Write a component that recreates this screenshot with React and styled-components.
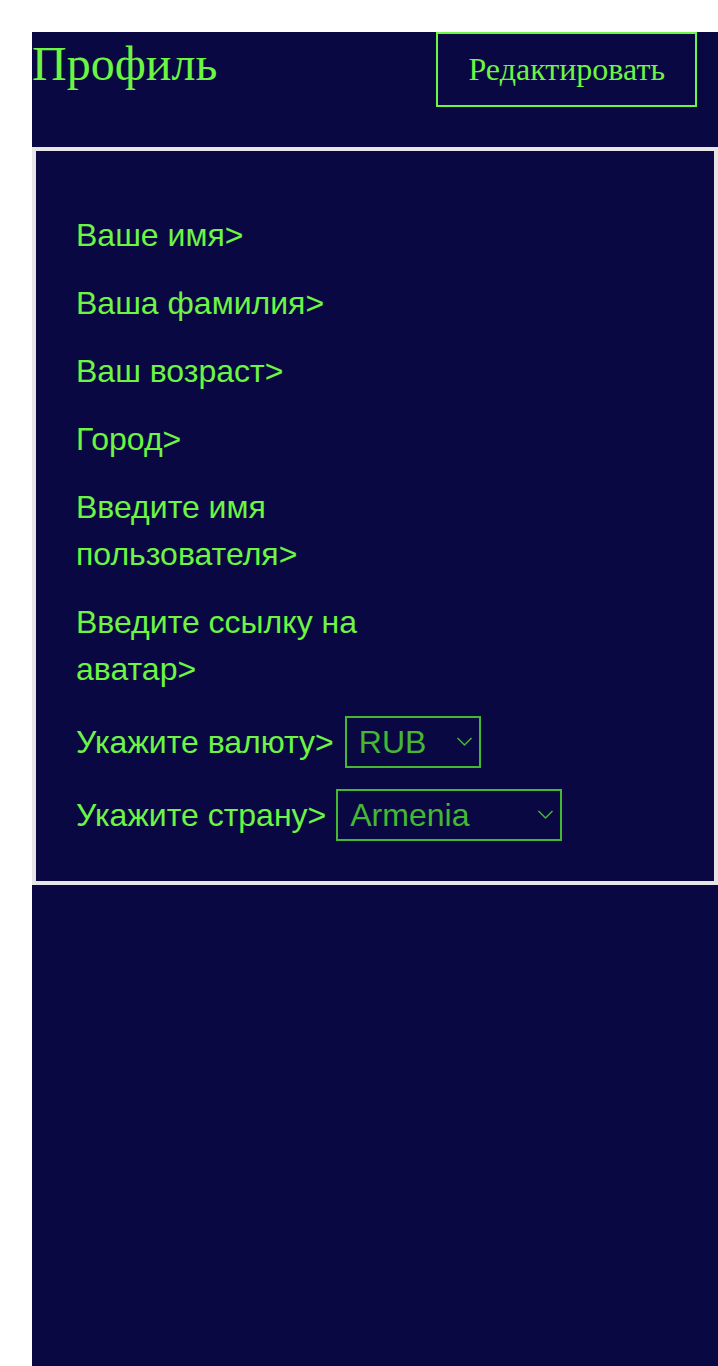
import React from "react";
import styled, { createGlobalStyle } from "styled-components";

const GlobalStyle = createGlobalStyle`
  html, body {
    margin: 0;
    padding: 0;
    background: #ffffff;
  }
`;

const Page = styled.div`
  margin: 32px 0 0 32px;
  min-height: calc(100vh - 32px);
  background: #0a0842;
  display: flex;
  flex-direction: column;
`;

const Header = styled.header`
  display: flex;
  justify-content: space-between;
  align-items: flex-start;
  height: 115px;
  padding-right: 21px;
  box-sizing: border-box;
`;

const Title = styled.h1`
  margin: 8px 0 0;
  font-family: "Liberation Serif", "Times New Roman", serif;
  font-weight: 400;
  font-size: 48px;
  line-height: 1;
  color: #6cf542;
`;

const EditButton = styled.button`
  background: transparent;
  border: 2px solid #6cf542;
  color: #6cf542;
  font-family: "Liberation Serif", "Times New Roman", serif;
  font-size: 32px;
  padding: 0 30px;
  height: 75px;
  cursor: pointer;
`;

const Card = styled.section`
  border: 4px solid #e6e6e6;
  padding: 61px 40px 40px;
  display: flex;
  flex-direction: column;
  gap: 21px;
`;

const Row = styled.div`
  display: flex;
  align-items: center;
  gap: ${(p) => (p.$gap ? p.$gap : 0)}px;
  margin-top: ${(p) => (p.$shift ? p.$shift : 0)}px;
`;

const Label = styled.span`
  max-width: 300px;
  font-family: "Liberation Sans", Arial, sans-serif;
  font-size: 32px;
  line-height: 47px;
  color: #6cf542;
`;

const SelectWrap = styled.div`
  position: relative;
  width: ${(p) => p.$width}px;
`;

const Select = styled.select`
  appearance: none;
  width: 100%;
  height: 52px;
  box-sizing: border-box;
  border: 2px solid #45b833;
  border-radius: 0;
  background: #0a0842;
  color: #45b833;
  font-family: "Liberation Sans", Arial, sans-serif;
  font-size: 32px;
  padding: 0 12px;
  outline: none;
`;

const Chevron = styled.svg`
  position: absolute;
  right: 8px;
  top: 20px;
  pointer-events: none;
`;

const Dropdown = ({ width, value, options }) => (
  <SelectWrap $width={width}>
    <Select defaultValue={value}>
      {options.map((o) => (
        <option key={o}>{o}</option>
      ))}
    </Select>
    <Chevron width="17" height="11" viewBox="0 0 17 11">
      <path d="M1.5 2 L8.5 9 L15.5 2" fill="none" stroke="#45b833" strokeWidth="1.5" />
    </Chevron>
  </SelectWrap>
);

const fields = [
  "Ваше имя>",
  "Ваша фамилия>",
  "Ваш возраст>",
  "Город>",
  "Введите имя пользователя>",
  "Введите ссылку на аватар>",
];

export default function App() {
  return (
    <>
      <GlobalStyle />
      <Page>
        <Header>
          <Title>Профиль</Title>
          <EditButton>Редактировать</EditButton>
        </Header>
        <Card>
          {fields.map((f) => (
            <Row key={f}>
              <Label>{f}</Label>
            </Row>
          ))}
          <Row $gap={11} $shift={2}>
            <Label>Укажите валюту&gt;</Label>
            <Dropdown width={136} value="RUB" options={["RUB", "USD", "EUR"]} />
          </Row>
          <Row $gap={10}>
            <Label>Укажите страну&gt;</Label>
            <Dropdown width={226} value="Armenia" options={["Armenia", "Russia", "Georgia"]} />
          </Row>
        </Card>
      </Page>
    </>
  );
}
